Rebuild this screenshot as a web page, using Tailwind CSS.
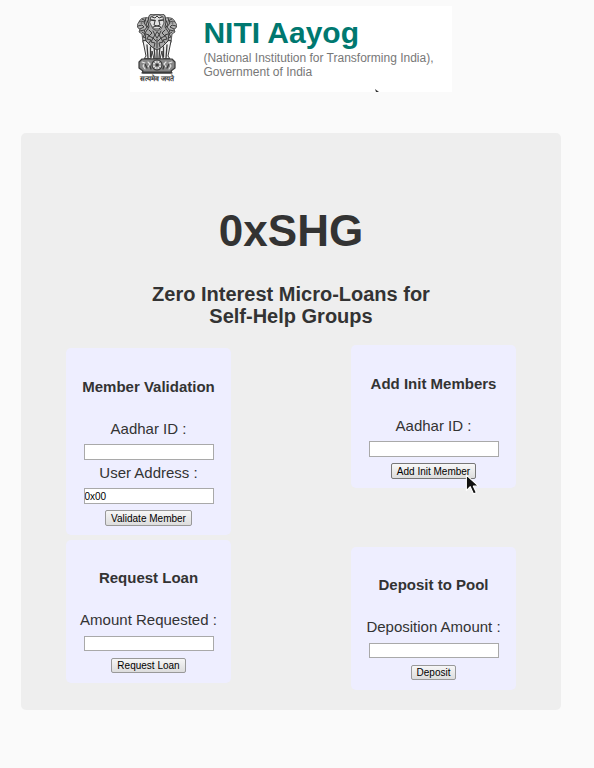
<!DOCTYPE html>
<html lang="en">
<head>
<meta charset="utf-8">
<meta name="viewport" content="width=device-width, initial-scale=1">
<title>0xSHG</title>
<script src="https://cdn.jsdelivr.net/npm/@tailwindcss/browser@4"></script>
</head>
<body class="min-h-screen bg-[#fafafa] pt-1.5 pr-[33px] pb-14 pl-[21px] font-['Liberation_Sans',Arial,sans-serif] text-[15px] leading-[22px] text-[#333]">

<header class="relative mx-auto flex w-fit gap-[26px] bg-white pt-2 pr-[18px] pb-2 pl-[7px]">
  <div class="flex w-10 flex-col items-center">
    <svg class="h-[60px] w-10" viewBox="0 0 40 60" fill="none" stroke="#3a3a3a" stroke-linecap="round" stroke-linejoin="round" role="img" aria-label="State Emblem of India">
      <!-- side lions -->
      <g id="side">
        <path d="M12 4C8 3 3 4 2 8L0 11l1 3 2 1-1 3 3 2 1 8 3 6 7 3 1-25z" fill="#b4b4b4" stroke-width=".8"/>
        <path d="M2 8c2-2 4 0 6 0M1 12l4-1 2 2-4 2M4 9h1M9 4l-2 5 3 4-3 4 3 4M12 5l-3 5 3 5-3 5 3 7M5 18l3 2-2 3 4 1-2 4M5 5l4 2M3 17l4-1" stroke-width="1"/>
      </g>
      <use href="#side" transform="matrix(-1 0 0 1 40 0)"/>
      <!-- legs -->
      <path d="M6 27l3 15-2 3h7l1-8 2 8h6l2-8 1 8h7l-2-3 3-15z" fill="#eee" stroke-width="1"/>
      <path d="M10 31l1 13M13.500 33v10M17 32l1 12M20 34v11M23 32l-1 12M26.500 33v10M30 31l-1 13" stroke-width="1.300"/>
      <path d="M8 45h5m3 0h8m3 0h5" stroke-width="1.5"/>
      <!-- front lion with mane -->
      <path d="M12 2C13-1 17 1 20 0c3 1 7-1 8 2l1 6-1 5 4 6-1 8-6 6-5 3-5-3-6-6-1-8 4-6-1-5z" fill="#aaa" stroke-width="1"/>
      <path d="M14 3l4-2h4l4 2 1 6-3 6-4 2-4-2-3-6z" fill="#e3e3e3" stroke-width=".8"/>
      <path d="M14 6l4 .5M26 6l-4 .5" stroke-width="1.6"/>
      <path d="M18 7l-1 4 3 1 3-1-1-4M16 13l4-1 4 1-2 2h-4zM15 3l3 1 2-2 2 2 3-1" stroke-width="1"/>
      <path d="M12 16l3 3-3 3 4 2-2 4 4 1-1 4M28 16l-3 3 3 3-4 2 2 4-4 1 1 4M16 17l2 4-2 3 3 3M24 17l-2 4 2 3-3 3M20 18l-2 3 2 3 2-3zM20 25v9M9 20l3 1-2 4 4 1-2 3M31 20l-3 1 2 4-4 1 2 3" stroke-width="1"/>
      <!-- abacus -->
      <path d="M5 45h30l3 3v6l-4 3 1 2H5l1-2-4-3v-6z" fill="#888" stroke-width="1.200"/>
      <circle cx="20" cy="51" r="5" fill="#ddd" stroke-width="1.2"/>
      <circle cx="20" cy="51" r="1.2" fill="#333"/>
      <path d="M20 46v10M15 51h10M16.500 47.500l7 7M23.500 47.500l-7 7" stroke-width=".5"/>
      <path d="M5 48l3 1-2 3 2 3M11 48l2 2-2 3M35 48l-3 1 2 3-2 3M29 48l-2 2 2 3" stroke="#e6e6e6" stroke-width="1.100"/>
      <path d="M8 50l2 4M13 52l1 3M32 50l-2 4M27 52l-1 3" stroke-width="1.300"/>
      <path d="M6 58.500h28" stroke-width="2"/>
    </svg>
    <span lang="hi" class="text-[7px] leading-[10px] font-bold whitespace-nowrap text-[#333]">सत्यमेव जयते</span>
  </div>
  <div class="pt-px">
    <p class="text-[30px] leading-9 font-bold text-[#007870]">NITI Aayog</p>
    <p class="text-xs leading-[14px] text-[#777]">(National Institution for Transforming India),<br>Government of India</p>
  </div>
  <svg class="absolute right-[73px] bottom-0 h-[3px] w-1" viewBox="0 0 4 3" aria-hidden="true"><path d="M0 0l4 3H1z" fill="#333"/></svg>
</header>

<main class="mt-[41px] rounded-[5px] bg-[#eee] px-[45px] pt-[73px] pb-5">
  <h1 class="text-center text-[44px] leading-[50px] font-bold">0xSHG</h1>
  <h2 class="mx-auto mt-[27px] max-w-[300px] text-center text-xl leading-[22px] font-bold">Zero Interest Micro-Loans for Self-Help Groups</h2>

  <div class="mt-[18px] flex items-start justify-between">
    <div class="mt-[3px] flex w-[165px] flex-col gap-[5px]">
      <form class="flex flex-col items-center rounded-[5px] bg-[#eef] pt-7 pb-[9px]">
        <h3 class="mb-5 font-bold">Member Validation</h3>
        <label for="validate-id">Aadhar ID :</label>
        <input id="validate-id" type="text" class="mt-1 h-4 w-[130px] border border-[#a9a9a9] bg-white pt-0.5 text-[10px] leading-none text-black">
        <label for="validate-address" class="mt-0.5">User Address :</label>
        <input id="validate-address" type="text" value="0x00" class="mt-1 h-4 w-[130px] border border-[#a9a9a9] bg-white pt-px text-[10px] leading-none text-black">
        <button type="button" class="mt-1.5 h-4 rounded-xs border border-[#999] bg-linear-to-b from-[#f6f6f6] to-[#ddd] px-[5px] pt-0.5 text-[10px] leading-none text-black">Validate Member</button>
      </form>
      <form class="flex flex-col items-center rounded-[5px] bg-[#eef] pt-[27px] pb-2.5">
        <h3 class="mb-5 font-bold">Request Loan</h3>
        <label for="loan-amount">Amount Requested :</label>
        <input id="loan-amount" type="text" class="mt-[5px] h-[15px] w-[130px] border border-[#a9a9a9] bg-white pt-0.5 text-[10px] leading-none text-black">
        <button type="button" class="mt-[7px] h-[15px] rounded-xs border border-[#999] bg-linear-to-b from-[#f6f6f6] to-[#ddd] px-[5px] pt-px text-[10px] leading-none text-black">Request Loan</button>
      </form>
    </div>

    <div class="flex w-[165px] flex-col gap-[59px]">
      <form class="flex flex-col items-center rounded-[5px] bg-[#eef] pt-7 pb-[9px]">
        <h3 class="mb-5 font-bold">Add Init Members</h3>
        <label for="init-id">Aadhar ID :</label>
        <input id="init-id" type="text" class="mt-1 h-4 w-[130px] border border-[#a9a9a9] bg-white pt-0.5 text-[10px] leading-none text-black">
        <button type="button" class="relative mt-1.5 h-4 rounded-xs border border-[#777] bg-linear-to-b from-[#f8f8f8] to-[#ddd] px-[5px] pt-0.5 text-[10px] leading-none text-black">Add Init Member
          <svg class="absolute top-2.5 -right-1.5 h-[21px] w-4" viewBox="0 0 14 19" aria-hidden="true"><path d="M1 1v14l3.500-3.500L7.500 18l2.500-1.200L7.300 11H12z" fill="#111" stroke="#fff" stroke-linejoin="round"/></svg>
        </button>
      </form>
      <form class="flex flex-col items-center rounded-[5px] bg-[#eef] pt-[27px] pb-2.5">
        <h3 class="mb-5 font-bold">Deposit to Pool</h3>
        <label for="deposit-amount">Deposition Amount :</label>
        <input id="deposit-amount" type="text" class="mt-[5px] h-[15px] w-[130px] border border-[#a9a9a9] bg-white pt-0.5 text-[10px] leading-none text-black">
        <button type="button" class="mt-[7px] h-[15px] rounded-xs border border-[#999] bg-linear-to-b from-[#f6f6f6] to-[#ddd] px-[5px] pt-px text-[10px] leading-none text-black">Deposit</button>
      </form>
    </div>
  </div>
</main>
</body>
</html>
